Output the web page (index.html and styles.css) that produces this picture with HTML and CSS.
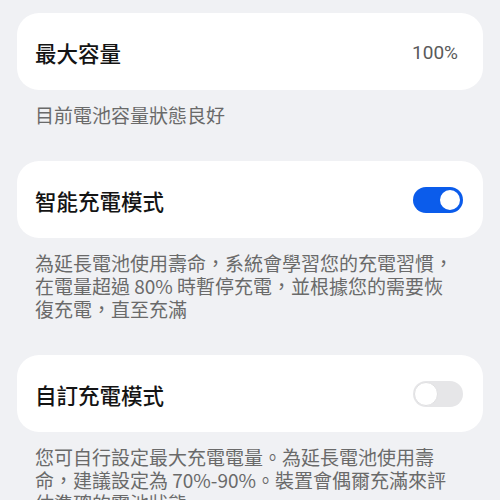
FILE: index.html
```html
<!DOCTYPE html>
<html lang="zh-Hant">
<head>
<meta charset="utf-8">
<link rel="stylesheet" href="styles.css">
</head>
<body>
<div class="page">
  <section class="group">
    <div class="card">
      <span class="title">最大容量</span>
      <span class="value">100%</span>
    </div>
    <p class="note">目前電池容量狀態良好</p>
  </section>
  <section class="group">
    <div class="card">
      <span class="title">智能充電模式</span>
      <span class="toggle on"><span class="knob"></span></span>
    </div>
    <p class="note">為延長電池使用壽命，系統會學習您的充電習慣，在電量超過 80% 時暫停充電，並根據您的需要恢復充電，直至充滿</p>
  </section>
  <section class="group">
    <div class="card">
      <span class="title">自訂充電模式</span>
      <span class="toggle off"><span class="knob"></span></span>
    </div>
    <p class="note">您可自行設定最大充電電量。為延長電池使用壽命，建議設定為 70%-90%。裝置會偶爾充滿來評估準確的電池狀態。</p>
  </section>
</div>
</body>
</html>
```
FILE: styles.css
```css
html, body {
  margin: 0;
  padding: 0;
  background: #f0f1f4;
  font-family: "Noto Sans CJK TC", "Noto Sans", sans-serif;
  overflow: hidden;
}
.page {
  padding: 13px 17px 0 17px;
  display: flex;
  flex-direction: column;
  gap: 35px;
}
.group {
  display: flex;
  flex-direction: column;
}
.card {
  background: #ffffff;
  border-radius: 22px;
  height: 77px;
  box-sizing: border-box;
  padding: 1px 20px 0 18px;
  display: flex;
  align-items: center;
  justify-content: space-between;
}
.title {
  font-size: 21.5px;
  font-weight: 500;
  color: #141414;
}
.value {
  font-size: 19px;
  color: #5a5a5a;
  margin-right: 5px;
  font-family: "Roboto", "Noto Sans", sans-serif;
}
.note {
  margin: 13px 0 0 0;
  padding: 0 28px 0 18px;
  font-size: 19px;
  line-height: 23px;
  color: #6a6a6a;
}
.toggle {
  width: 50px;
  height: 26px;
  border-radius: 13px;
  box-sizing: border-box;
  display: flex;
  align-items: center;
  padding: 2px;
}
.toggle .knob {
  width: 22px;
  height: 22px;
  border-radius: 50%;
  background: #fff;
  box-sizing: border-box;
}
.toggle.on {
  background: #0b5ceb;
  justify-content: flex-end;
}
.toggle.on .knob {
  border: 2px solid #0b5ceb;
  width: 24px;
  height: 24px;
  margin-right: -1px;
}
.toggle.off {
  background: #e6e6e8;
  justify-content: flex-start;
}
.toggle.off .knob {
  border: 1px solid #e0e0e2;
  width: 24px;
  height: 24px;
  margin-left: -1px;
}
```
